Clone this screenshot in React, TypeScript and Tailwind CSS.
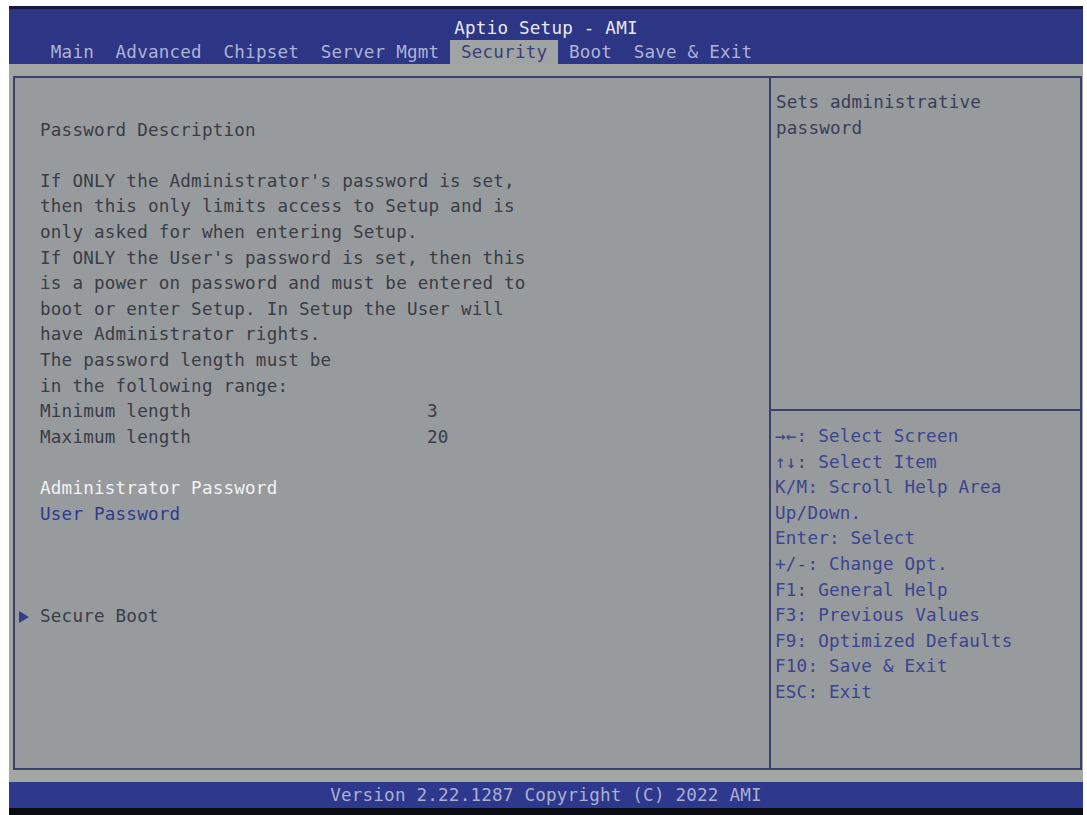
import React from "react";

const mono = { fontFamily: '"DejaVu Sans Mono", "Liberation Mono", monospace' };

const bodyLines: string[] = [
  "If ONLY the Administrator's password is set,",
  "then this only limits access to Setup and is",
  "only asked for when entering Setup.",
  "If ONLY the User's password is set, then this",
  "is a power on password and must be entered to",
  "boot or enter Setup. In Setup the User will",
  "have Administrator rights.",
  "The password length must be",
  "in the following range:",
];

const helpLines: string[] = [
  "→←: Select Screen",
  "↑↓: Select Item",
  "K/M: Scroll Help Area",
  "Up/Down.",
  "Enter: Select",
  "+/-: Change Opt.",
  "F1: General Help",
  "F3: Previous Values",
  "F9: Optimized Defaults",
  "F10: Save & Exit",
  "ESC: Exit",
];

const tabs = ["Main", "Advanced", "Chipset", "Server Mgmt", "Security", "Boot", "Save & Exit"];

export default function App() {
  return (
    <div
      className="w-[1087px] h-[815px] bg-white pl-[9px] pt-[6px] pr-[4px] overflow-hidden text-[17.6px] tracking-[0.2px] whitespace-pre"
      style={mono}
    >
      <div className="flex flex-col h-full">
        {/* Header */}
        <div className="h-[58px] border-t-[3px] border-[#171a3e] bg-[#2d3585] flex flex-col">
          <div className="pt-[7px] h-[31px] leading-[24px] text-center text-[#e8e9f2]">Aptio Setup - AMI</div>
          <div className="flex h-[24px] leading-[24px] pl-[31px]">
            {tabs.map((t) =>
              t === "Security" ? (
                <div key={t} className="px-[10.8px] bg-[#a0a4a4] text-[#3b4077]">
                  {t}
                </div>
              ) : (
                <div key={t} className="px-[10.8px] text-[#aeb3d4]">
                  {t}
                </div>
              )
            )}
          </div>
        </div>

        {/* Body band */}
        <div className="flex-1 bg-[#a3a7a4] pt-[12px] pb-[12px] pl-[4px] pr-[1px] flex">
          <div className="flex-1 flex border-2 border-[#3b3f6c] bg-[#979b9d]">
            {/* Left column */}
            <div className="w-[756px] border-r-2 border-[#3b3f6c] pl-[25px] pt-[14px] leading-[25.6px] text-[#3a3c46]">
              <div className="h-[25.6px]" />
              <div>Password Description</div>
              <div className="h-[25.6px]" />
              {bodyLines.map((l, i) => (
                <div key={i}>{l}</div>
              ))}
              <div className="flex">
                <div className="w-[387px]">Minimum length</div>
                <div>3</div>
              </div>
              <div className="flex">
                <div className="w-[387px]">Maximum length</div>
                <div>20</div>
              </div>
              <div className="h-[25.6px]" />
              <div className="text-[#f2f2f4]">Administrator Password</div>
              <div className="text-[#2f3a8c]">User Password</div>
              <div className="h-[76.8px]" />
              <div className="flex items-center -ml-[21px]">
                <svg width="10" height="12" viewBox="0 0 10 12" className="mr-[11px]">
                  <polygon points="0,0 10,6 0,12" fill="#373d85" />
                </svg>
                <span>Secure Boot</span>
              </div>
            </div>

            {/* Right column */}
            <div className="flex-1 flex flex-col leading-[25.6px]">
              <div className="h-[333px] border-b-2 border-[#3b3f6c] pl-[5px] pt-[12px] text-[#3a3d56]">
                <div>Sets administrative</div>
                <div>password</div>
              </div>
              <div className="pl-[4px] pt-[13px] text-[#3c448e]">
                {helpLines.map((l, i) => (
                  <div key={i}>{l}</div>
                ))}
              </div>
            </div>
          </div>
        </div>

        {/* Footer */}
        <div className="h-[26px] bg-[#2e388c] leading-[26px] text-center text-[#aab0d2]">
          Version 2.22.1287 Copyright (C) 2022 AMI
        </div>
        <div className="h-[7px] bg-[#0c0c14]" />
      </div>
    </div>
  );
}
